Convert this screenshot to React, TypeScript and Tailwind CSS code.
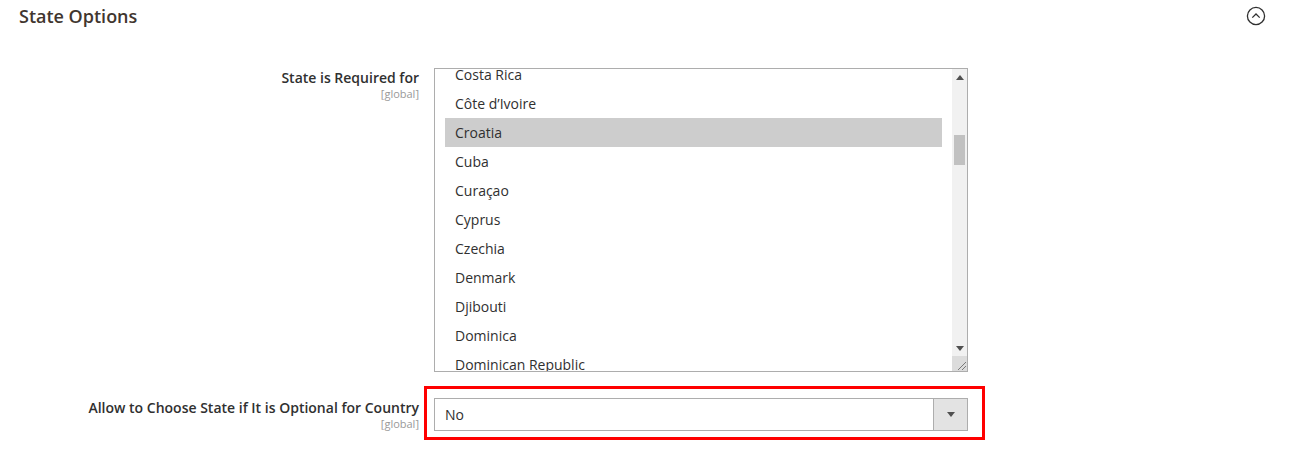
import React from "react";

const countries = [
  "Costa Rica",
  "Côte d’Ivoire",
  "Croatia",
  "Cuba",
  "Curaçao",
  "Cyprus",
  "Czechia",
  "Denmark",
  "Djibouti",
  "Dominica",
  "Dominican Republic",
];

function Triangle({ up }: { up?: boolean }) {
  return (
    <svg width="8" height="5" viewBox="0 0 8 5">
      <polygon points={up ? "0,5 8,5 4,0" : "0,0 8,0 4,5"} fill="#505050" />
    </svg>
  );
}

function ScrollBar() {
  return (
    <div className="flex w-[15px] flex-col bg-[#f1f1f1]">
      <div className="flex h-[15px] items-center justify-center pt-[1px]">
        <Triangle up />
      </div>
      <div className="ml-[2px] mt-[51px] h-[30px] w-[11px] bg-[#c1c1c1]" />
      <div className="flex-1" />
      <div className="flex h-[15px] items-center justify-center">
        <Triangle />
      </div>
      <div className="relative h-[15px] bg-[#dcdcdc]">
        <svg className="absolute right-[1px] bottom-[1px]" width="9" height="9" viewBox="0 0 9 9">
          <line x1="1" y1="9" x2="9" y2="1" stroke="#7a7a7a" strokeWidth="1" />
          <line x1="5" y1="9" x2="9" y2="5" stroke="#7a7a7a" strokeWidth="1" />
        </svg>
      </div>
    </div>
  );
}

function CountryList() {
  return (
    <div className="flex h-[304px] w-[534px] overflow-hidden border border-[#adadad] bg-white">
      <div className="flex-1 overflow-hidden pl-[10px] pr-[10px]">
        <div className="-mt-[9px]">
          {countries.map((c) => (
            <div
              key={c}
              className={
                "h-[29px] px-[10px] leading-[29px] text-[14px] text-[#303030] " +
                (c === "Croatia" ? "bg-[#cdcdcd]" : "")
              }
            >
              {c}
            </div>
          ))}
        </div>
      </div>
      <ScrollBar />
    </div>
  );
}

function Label({ text }: { text: string }) {
  return (
    <div className="w-[400px] shrink-0 text-right">
      <div className="text-[14px] font-semibold leading-[19px] text-[#303030]">{text}</div>
      <div className="text-[11px] leading-[14px] text-[#999999]">[global]</div>
    </div>
  );
}

export default function App() {
  return (
    <div className="h-[449px] w-[1299px] bg-white pl-[19px] font-['Open_Sans',sans-serif]">
      <div className="flex h-[32px] items-center justify-between pr-[33px]">
        <span className="text-[18px] font-semibold text-[#41362f]">State Options</span>
        <svg width="20" height="20" viewBox="0 0 20 20">
          <circle cx="10" cy="10" r="8.6" fill="none" stroke="#303030" strokeWidth="1.3" />
          <polyline points="6.3,11.6 10,8 13.7,11.6" fill="none" stroke="#303030" strokeWidth="1.3" />
        </svg>
      </div>

      <div className="mt-[36px] flex gap-[15px]">
        <Label text="State is Required for" />
        <CountryList />
      </div>

      <div className="mt-[26px] flex gap-[15px]">
        <Label text="Allow to Choose State if It is Optional for Country" />
        <div className="relative">
          <div className="flex h-[33px] w-[534px] border border-[#adadad] bg-white">
            <div className="flex flex-1 items-center pl-[10px] text-[14px] text-[#303030]">No</div>
            <div className="flex w-[34px] items-center justify-center border-l border-[#adadad] bg-[#e3e3e3]">
              <Triangle />
            </div>
          </div>
          <div className="pointer-events-none absolute -top-[12px] -right-[17px] -bottom-[9px] -left-[10px] border-[3px] border-[#ff0000]" />
        </div>
      </div>
    </div>
  );
}
